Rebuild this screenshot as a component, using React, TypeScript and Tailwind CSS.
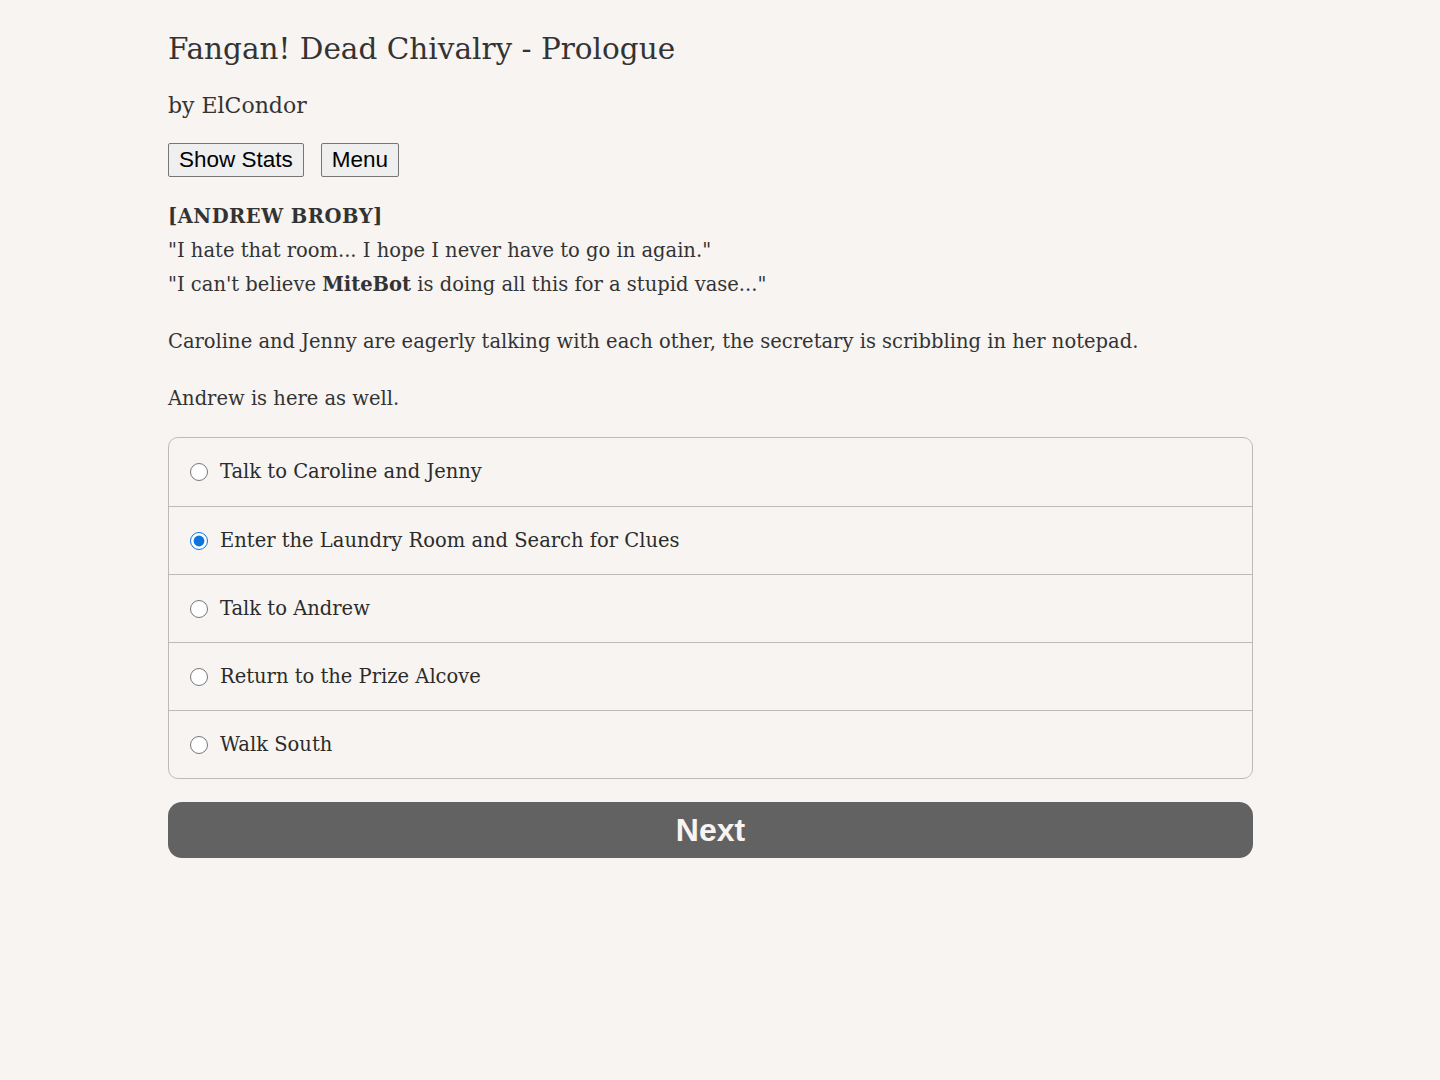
import { useState } from 'react';

const choices = [
  'Talk to Caroline and Jenny',
  'Enter the Laundry Room and Search for Clues',
  'Talk to Andrew',
  'Return to the Prize Alcove',
  'Walk South',
];

const serif = "font-['DejaVu_Serif',Georgia,serif]";

export default function App() {
  const [selected, setSelected] = useState(1);

  return (
    <div className={`min-h-[1080px] w-full bg-[#f7f4f1] text-[#333333] ${serif}`}>
      <div className="ml-[168px] w-[1085px] pt-[27px]">
        {/* Header */}
        <h1 className="text-[29.5px] leading-[44px] font-normal">Fangan! Dead Chivalry - Prologue</h1>
        <p className="mt-[18px] text-[22px] leading-[34px]">by ElCondor</p>

        <div className="mt-[20px] flex gap-[17px] font-['Liberation_Sans',Arial,sans-serif]">
          <button className="h-[34px] px-[10px] text-[22.5px] leading-none bg-[#efefef] border border-[#767676] rounded-[2px] text-black">
            Show Stats
          </button>
          <button className="h-[34px] px-[10px] text-[22.5px] leading-none bg-[#efefef] border border-[#767676] rounded-[2px] text-black">
            Menu
          </button>
        </div>

        {/* Story text */}
        <div className="mt-[23px] text-[19.5px] leading-[34px]">
          <p className="font-bold tracking-[0.5px]">[ANDREW BROBY]</p>
          <p>"I hate that room... I hope I never have to go in again."</p>
          <p>
            "I can't believe <b>MiteBot</b> is doing all this for a stupid vase..."
          </p>
          <p className="mt-[23px]">
            Caroline and Jenny are eagerly talking with each other, the secretary is scribbling in her notepad.
          </p>
          <p className="mt-[23px]">Andrew is here as well.</p>
        </div>

        {/* Choices */}
        <div className="mt-[21px] border border-[#bdbbb9] rounded-[10px] overflow-hidden">
          {choices.map((c, i) => (
            <label
              key={c}
              className={`flex items-center h-[68px] pl-[21px] cursor-pointer ${i > 0 ? 'border-t border-[#bdbbb9]' : ''}`}
            >
              <input
                type="radio"
                name="choice"
                checked={selected === i}
                onChange={() => setSelected(i)}
                className="w-[18px] h-[18px] m-0 accent-[#0b74de]"
              />
              <span className="ml-[12px] text-[19.5px] text-[#2b2b2b]">{c}</span>
            </label>
          ))}
        </div>

        <button className="mt-[23px] w-full h-[56px] rounded-[14px] bg-[#636262] text-[#f7f4f1] text-[32px] font-bold font-['Liberation_Sans',Arial,sans-serif]">
          Next
        </button>
      </div>
    </div>
  );
}
